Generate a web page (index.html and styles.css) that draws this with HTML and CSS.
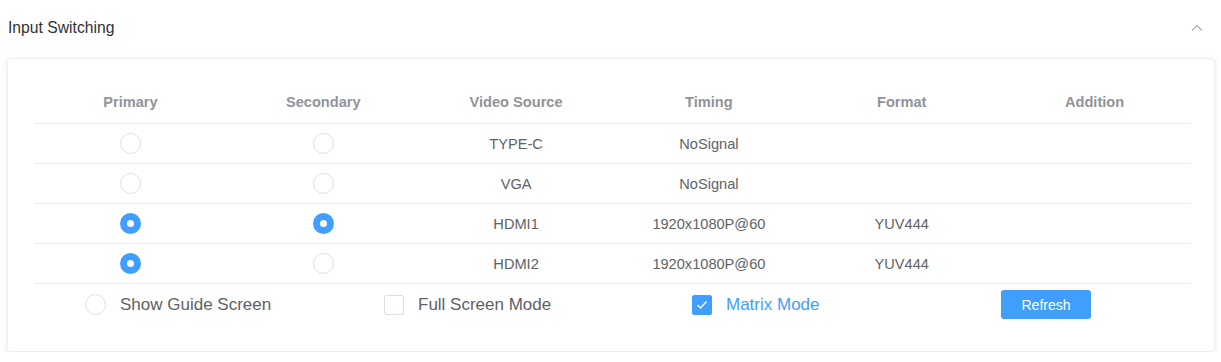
FILE: index.html
```html
<!DOCTYPE html>
<html lang="en">
<head>
  <meta charset="UTF-8">
  <meta name="viewport" content="width=device-width, initial-scale=1.0">
  <title>Input Switching</title>
  <link rel="stylesheet" href="styles.css">
</head>
<body>
  <div class="panel-head">
    <span class="panel-title">Input Switching</span>
    <svg class="chevron" width="12" height="8" viewBox="0 0 12 8">
      <path d="M1 6.5 L6 1.5 L11 6.5" fill="none" stroke="#a8abb2" stroke-width="1.2"/>
    </svg>
  </div>

  <div class="card">
    <table class="switch-table">
      <thead>
        <tr>
          <th>Primary</th>
          <th>Secondary</th>
          <th>Video Source</th>
          <th>Timing</th>
          <th>Format</th>
          <th>Addition</th>
        </tr>
      </thead>
      <tbody>
        <tr>
          <td><span class="radio"></span></td>
          <td><span class="radio"></span></td>
          <td>TYPE-C</td>
          <td>NoSignal</td>
          <td></td>
          <td></td>
        </tr>
        <tr>
          <td><span class="radio"></span></td>
          <td><span class="radio"></span></td>
          <td>VGA</td>
          <td>NoSignal</td>
          <td></td>
          <td></td>
        </tr>
        <tr>
          <td><span class="radio checked"></span></td>
          <td><span class="radio checked"></span></td>
          <td>HDMI1</td>
          <td>1920x1080P@60</td>
          <td>YUV444</td>
          <td></td>
        </tr>
        <tr>
          <td><span class="radio checked"></span></td>
          <td><span class="radio"></span></td>
          <td>HDMI2</td>
          <td>1920x1080P@60</td>
          <td>YUV444</td>
          <td></td>
        </tr>
      </tbody>
    </table>

    <div class="controls">
      <label class="option">
        <span class="radio"></span>
        <span>Show Guide Screen</span>
      </label>
      <label class="option">
        <span class="checkbox"></span>
        <span>Full Screen Mode</span>
      </label>
      <label class="option active">
        <span class="checkbox checked">
          <svg width="12" height="10" viewBox="0 0 12 10">
            <path d="M1.5 5 L4.5 8 L10.5 1.5" fill="none" stroke="#fff" stroke-width="1.4"/>
          </svg>
        </span>
        <span>Matrix Mode</span>
      </label>
      <div>
        <button class="btn-primary">Refresh</button>
      </div>
    </div>
  </div>
</body>
</html>
```

FILE: styles.css
```css
body {
  margin: 0;
  font-family: 'Liberation Sans', Arial, sans-serif;
  background: #fff;
  color: #606266;
}
.panel-head {
  display: flex;
  align-items: center;
  justify-content: space-between;
  height: 55px;
  padding: 0 18px 0 8px;
}
.panel-title {
  font-size: 15.7px;
  color: #303133;
}
.chevron {
  display: block;
}
.card {
  margin: 3px 6px 0 7px;
  padding: 22px 23px 26px 26px;
  border: 1px solid #ebeef5;
  border-radius: 4px;
  box-shadow: 0 2px 6px 0 rgba(0, 0, 0, 0.08);
}
.switch-table {
  width: 100%;
  border-collapse: collapse;
  table-layout: fixed;
  font-size: 14.6px;
}
.switch-table th {
  height: 42px;
  color: #909399;
  font-weight: bold;
  border-bottom: 1px solid #ebeef5;
  padding: 0;
}
.switch-table td {
  height: 39px;
  text-align: center;
  border-bottom: 1px solid #ebeef5;
  padding: 0;
}
.radio {
  display: inline-block;
  box-sizing: border-box;
  width: 21px;
  height: 21px;
  border: 1px solid #dcdfe6;
  border-radius: 50%;
  vertical-align: middle;
  background: #fff;
}
.radio.checked {
  border: 7px solid #409eff;
  background: #fff;
}
.controls {
  display: grid;
  grid-template-columns: 299px 308px 309px auto;
  align-items: center;
  height: 41px;
  padding-left: 51px;
  font-size: 17px;
}
.option {
  display: flex;
  align-items: center;
  gap: 14px;
  color: #606266;
}
.option.active {
  color: #409eff;
}
.checkbox {
  display: inline-flex;
  align-items: center;
  justify-content: center;
  box-sizing: border-box;
  width: 20px;
  height: 20px;
  border: 1px solid #dcdfe6;
  border-radius: 2px;
  background: #fff;
}
.checkbox.checked {
  background: #409eff;
  border-color: #409eff;
}
.btn-primary {
  width: 90px;
  height: 29px;
  border: none;
  border-radius: 3px;
  background: #409eff;
  color: #fff;
  font-family: inherit;
  font-size: 14px;
  cursor: pointer;
}
```
